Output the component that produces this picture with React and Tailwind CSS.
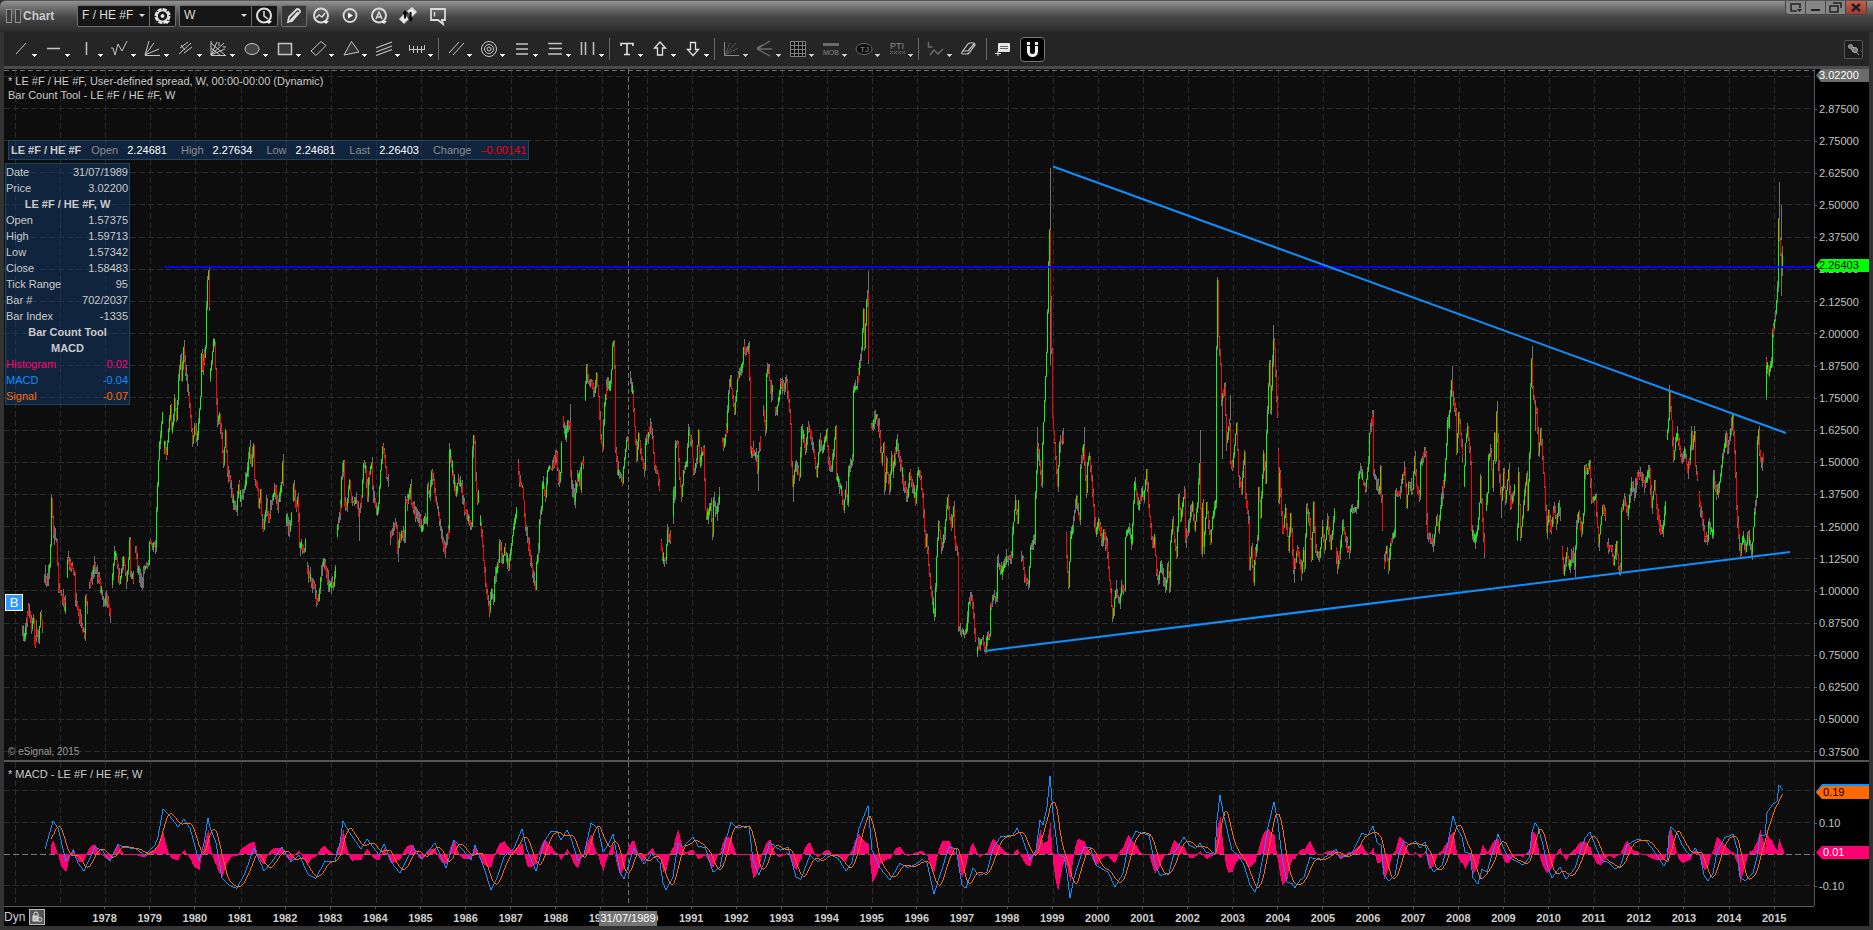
import React from "react";

const YEAR_LINES = [
  15, 60, 105, 150, 195, 241, 286, 331, 376, 421, 466, 511, 556, 602, 647, 692, 737, 782, 827, 872,
  917, 962, 1008, 1053, 1098, 1143, 1188, 1233, 1278, 1323, 1368, 1414, 1459, 1504, 1549, 1594, 1639,
  1684, 1729, 1774,
];
const PRICE_LINES = [
  76, 108, 140, 172, 204, 237, 269, 301, 333, 365, 397, 430, 462, 494, 526, 558, 590, 623, 655, 687,
  719, 751,
];
const MACD_LINES = [790, 822, 885];

const YEARS = Array.from({ length: 38 }, (_, i) => 1978 + i);
const PRICES = Array.from({ length: 21 }, (_, i) => (2.875 - i * 0.125).toFixed(5));

// Weekly price path, one string for each unbroken run of contracts.
const PRICE_RUNS = [
  "22,627 25,637 29,606 32,627 34,618 35,645 37,630 39,639 41,612 43,628",
  "44,575 47,581 50,567 51,545 52,498 54,535 57,540 59,590 62,594 66,609",
  "67,578 68,560 71,566 75,572 76,600 79,612 82,628 85,634 86,597 88,612",
  "89,588 95,565 100,582 104,604 107,597 111,614",
  "112,585 115,552 117,558 120,583 124,557 127,581 129,560 130,540 131,572 134,579",
  "135,553 136,547 138,568 142,583 145,568 149,565 150,542 153,545 156,548 157,510 158,485 159,460 160,442 161,435 163,412",
  "164,443 167,455 169,430 171,405 172,430 174,415 175,398 177,420 179,380 181,360 182,380 184,347 186,373 189,393 190,403 193,443 195,427 197,438 198,435 200,410 201,397 202,353 203,370 206,347 207,307 208,280 209,271 209,307",
  "210,377 212,363 214,340 215,343 216,370 217,403 218,420 220,415 222,438 224,463 226,430 228,473 231,483 233,497 237,510 239,485 241,500 245,488 248,470 250,447 252,466 254,445 255,480 258,488 259,508 261,490 262,516 264,530 267,503 269,521 272,503 276,487 278,508 282,483 283,463 284,484",
  "286,523 287,515 290,531 292,513",
  "293,500 294,485 296,508 298,497 300,543 303,548 305,551 306,540",
  "307,568 312,581 315,588 317,601 319,601 321,577 324,560 327,573 329,588 332,583 334,587 336,567",
  "337,537 338,525 341,507 342,477 344,462 345,505 347,507 350,480 352,503 354,503 357,500 359,517 360,510 362,497 364,463 366,467 368,497 369,477 372,463 373,487 377,513 379,503 381,470 383,447 385,457 387,477 389,483",
  "390,540 394,527 397,525 398,553 400,540 402,533 405,537 406,503 408,500 411,485 412,503 417,518 419,515 422,530 425,517 427,523 428,487 430,497 432,472 434,480 436,502 438,507 441,527 443,540 445,553 447,540 449,530 450,450 453,470 456,493 459,480 462,487 465,510 468,518 472,527 473,450 474,435 475,443 476,480 478,503 479,490",
  "480,518 482,533 484,560 486,583 488,600 490,610 492,590 494,602 495,577 499,563 500,543 503,563 505,547 509,568 512,543 514,527 517,510",
  "518,463 520,483 523,487 526,527 528,540 531,560 534,577 536,590 537,563 539,550 540,520 542,507 543,483 546,497 548,470 553,467 557,453 559,483 561,473 562,443",
  "563,417 566,437 568,423 570,423 571,477 575,502 577,483 580,473 581,490 582,463 584,463",
  "585,400 587,367 589,383 592,383 595,393 597,373 599,397 601,440 603,447 605,403 608,380 610,390 612,370 613,347 614,343 615,367 616,450 618,470 623,483 624,467 627,440 629,443",
  "630,378 633,393 635,427 637,460 639,433 642,457 645,470 646,443 651,427 653,437 655,467 658,473 660,490",
  "661,543 664,560 666,560 668,530 669,540 671,537",
  "673,517 674,490 675,497 676,443 678,443 680,477 682,497 684,470 687,463 689,430 692,443 694,473 697,460 699,430 700,463 704,448 706,510 708,517 711,505 713,533 714,500 717,513 720,497",
  "722,438 724,445 727,430 728,410 729,393 731,378 733,397 735,413 738,380 740,373 743,363 744,347 746,353 749,347 750,377 751,453 753,450 757,457 758,470 759,453 761,440",
  "763,413 764,410 766,430 767,373 769,367 771,393 773,387",
  "775,410 777,413 779,397 782,380 784,390 787,380 789,403 791,423 792,467 793,487 796,463 800,477 802,427 806,450 808,427 811,433 815,457 817,477 820,440 823,450 827,432 829,460 832,470 834,450 836,427 837,477 842,490 844,510 846,490 848,503 849,470 853,457 854,390 857,387 859,373 862,350 864,310 865,347 867,300 868,293 868,333 869,360",
  "871,427 874,423 877,417 880,433 882,463 884,443 885,487 887,463 890,490 892,457 893,470 897,443 901,463 904,483 908,497 910,473 913,487 916,503 918,473 920,470 923,497 926,547 927,537 930,577 932,597 935,617 937,557 939,523 942,547 945,533 948,497 950,520 952,527 954,507 955,540 958,553 959,627 962,633 967,630 969,603 972,597 974,617 976,640",
  "977,653 980,643 983,640 986,652 987,638 990,635 991,607 993,597 997,598 998,563 1002,572 1007,558 1012,558 1013,533 1016,500 1018,523 1019,500",
  "1021,557 1023,558 1025,577 1029,585 1031,547 1035,540 1036,493 1038,447 1040,460 1042,483 1043,443 1045,400 1047,353 1048,312 1049,262 1050,230 1051,300 1052,350 1053,417 1056,457 1058,487 1060,443 1063,437 1064,440",
  "1066,533 1067,557 1069,587 1071,537 1074,520 1077,497 1080,520 1081,467 1084,447 1087,493 1088,463 1090,457 1093,493 1096,533 1099,520 1103,543 1104,530 1108,553 1111,593 1113,617 1116,590 1120,603 1122,587 1125,590 1126,537 1129,527 1132,543 1134,503 1135,483 1139,507 1142,490 1144,500 1147,470 1149,507 1153,547 1155,537 1157,573 1159,580 1161,563 1166,590 1168,567 1170,587 1171,543 1173,523 1177,557 1179,497 1181,520 1185,490 1186,540 1190,520 1193,503 1195,530 1198,503 1200,463 1202,553 1203,503 1204,547 1207,503 1211,543 1213,517 1216,503 1217,347 1218,280 1219,337 1221,363 1222,400 1225,387 1227,443 1229,427 1230,427 1231,463 1233,467 1237,423 1239,477 1242,490 1245,453 1246,497 1249,520 1250,567 1252,547 1254,583 1255,560 1258,540 1259,487 1261,517 1264,453 1266,483 1267,433 1270,363 1271,410 1273,363 1274,340 1275,350 1277,400 1278,417",
  "1278,450 1279,500 1280,473 1283,533 1286,510 1289,550 1291,513 1294,570 1298,550 1302,573 1304,550 1305,567 1307,507 1310,520 1312,560 1314,503 1316,550 1320,557 1323,527 1325,550 1328,520 1331,550 1335,510",
  "1336,547 1338,567 1341,547 1343,523 1348,550 1350,550 1351,510 1358,507 1359,477 1361,467 1363,480 1366,487 1369,463 1370,433 1373,417 1374,473 1377,483 1380,490 1381,467 1383,530",
  "1384,567 1387,547 1389,570 1391,543 1395,533 1396,493 1400,493 1405,467 1407,507 1409,483 1413,490 1415,457 1417,487 1420,497 1421,463 1425,452 1426,453 1427,520 1428,533 1434,543 1437,517 1439,530 1442,497 1445,477 1447,443 1448,420 1449,427 1452,380 1453,397 1456,410 1457,453 1459,413 1463,457",
  "1464,487 1466,443 1468,427 1471,463 1472,530 1475,540 1478,530 1480,503 1481,477 1483,520 1485,553",
  "1486,510 1488,493 1489,457 1491,453 1493,487 1495,433 1496,460 1497,413 1499,463 1502,500 1504,473 1506,500 1509,470 1511,507 1515,487",
  "1517,540 1518,527 1519,473 1521,537 1523,517 1525,493 1527,477 1528,510 1530,453 1531,387 1532,360 1533,387 1535,403 1537,410 1539,453 1541,430 1543,457 1545,487 1547,533 1549,510 1551,530 1555,507 1557,523 1559,503 1561,517",
  "1562,547 1564,573 1567,553 1570,567 1573,553 1575,567 1577,527 1579,513 1582,533 1584,513 1585,467 1587,473 1590,463 1592,500 1596,497 1599,543 1603,507 1606,517",
  "1607,547 1612,547 1614,563 1617,543 1619,567 1621,570 1622,510 1625,500 1628,513 1632,483 1635,492 1638,475 1642,475 1645,485 1650,468 1652,508 1655,482 1657,508 1661,532 1664,525 1666,502",
  "1667,440 1669,420 1670,393 1672,420 1674,460 1677,433 1680,447 1682,463 1685,450 1686,457 1688,473 1690,460 1692,433 1693,447 1695,433 1696,467 1698,478",
  "1699,495 1702,515 1705,537 1708,540 1709,522 1713,535 1714,475 1717,495 1720,482 1722,465 1723,457 1727,433 1728,450 1733,417 1734,433 1736,475 1737,508 1739,538 1741,553 1743,537 1746,552 1748,535 1752,553 1753,542 1755,512 1757,498 1758,440 1759,430 1760,453 1762,466 1764,453",
  "1766,397 1766,360 1769,373 1772,363 1773,333 1776,313 1778,287 1779,220 1780,240 1781,255 1782,267 1783,255",
];

// x, high, low of weeks whose range goes far beyond the close
const LONG_WICKS = [
  [209, 267, 280], [283, 454, 466], [359, 517, 541], [398, 540, 562], [570, 404, 424], [575, 480, 508],
  [758, 455, 491], [793, 475, 502], [868, 271, 293], [1050, 168, 365], [1037, 427, 447], [1084, 427, 450],
  [1200, 430, 463], [1222, 400, 459], [1230, 395, 420], [1273, 325, 345], [1294, 560, 583], [1372, 410, 420],
  [1452, 366, 385], [1475, 540, 549], [1497, 401, 415], [1501, 490, 518], [1532, 346, 362], [1535, 400, 431],
  [1575, 560, 577], [1599, 540, 551], [1669, 388, 395], [1752, 545, 560], [1779, 182, 222], [1781, 205, 240],
  [1781, 265, 296], [1782, 246, 276],
];

const MACD_TRACE =
  "45,849 53,821 58,828 66,861 73,850 78,863 84,871 95,847 102,850 110,861 118,844 124,847 135,848 145,855 155,845 158,837 163,809 169,815 178,827 184,819 190,828 199,861 204,843 208,818 210,827 216,843 222,878 229,885 237,888 245,873 254,848 264,871 271,863 282,847 291,862 299,855 308,874 316,878 325,861 335,861 340,843 343,821 349,832 361,849 367,839 379,855 384,844 392,863 400,873 413,847 422,859 435,843 446,868 454,840 463,850 471,860 475,845 484,868 491,890 497,878 504,857 514,848 522,829 527,850 536,871 545,840 551,831 557,831 561,840 567,830 571,838 578,861 584,855 591,823 598,828 603,852 609,843 613,834 620,872 624,879 634,848 644,864 652,853 660,863 663,883 666,890 673,877 678,843 683,847 693,837 698,846 705,847 713,872 720,867 725,843 731,822 736,827 749,826 753,860 759,875 764,862 770,842 780,850 788,847 796,877 801,879 810,855 818,862 828,853 838,858 846,871 852,862 859,828 868,806 872,850 880,868 890,880 900,863 908,867 916,864 922,859 927,863 934,894 940,875 949,847 956,848 962,885 966,888 973,868 979,875 987,872 993,848 1001,836 1013,835 1017,828 1022,837 1030,860 1036,850 1040,820 1043,825 1047,807 1050,776 1053,813 1058,853 1064,857 1067,873 1070,898 1074,878 1077,868 1084,847 1090,847 1096,865 1108,872 1115,887 1123,873 1128,847 1136,831 1149,835 1155,865 1160,875 1169,873 1174,853 1184,837 1189,845 1196,848 1200,843 1206,852 1215,854 1217,820 1220,795 1224,817 1232,850 1238,855 1244,865 1250,885 1255,892 1258,883 1263,857 1268,827 1274,802 1278,823 1282,857 1287,882 1292,883 1295,888 1300,880 1304,877 1310,857 1321,860 1336,849 1340,858 1352,853 1362,833 1368,835 1373,826 1377,842 1381,845 1384,875 1389,881 1395,875 1399,853 1404,841 1410,845 1415,841 1420,848 1425,842 1429,865 1434,872 1442,865 1447,848 1453,816 1457,828 1462,837 1465,852 1470,853 1473,878 1478,884 1482,869 1487,872 1492,855 1498,834 1503,847 1508,857 1519,862 1523,865 1529,858 1532,832 1535,823 1538,827 1543,845 1547,865 1552,878 1560,867 1566,879 1575,868 1580,852 1585,838 1590,832 1596,847 1601,860 1608,862 1614,868 1620,867 1627,845 1637,839 1645,840 1652,848 1658,857 1664,866 1667,860 1669,835 1671,827 1677,833 1682,845 1690,856 1695,848 1700,855 1704,875 1708,881 1713,873 1717,852 1725,837 1733,834 1737,848 1740,877 1745,881 1753,873 1757,857 1760,835 1765,835 1767,813 1772,805 1777,801 1779,785 1783,790";

const parse = (s) => s.split(" ").map((p) => p.split(",").map(Number));

function buildBars() {
  let seed = 7;
  const rand = () => {
    seed = (seed * 16807) % 2147483647;
    return seed / 2147483647;
  };
  let wick = "";
  let up = "";
  let down = "";
  PRICE_RUNS.forEach((run) => {
    const pts = parse(run);
    for (let i = 0; i < pts.length - 1; i++) {
      const [x0, y0] = pts[i];
      const [x1, y1] = pts[i + 1];
      const steps = Math.max(1, x1 - x0);
      for (let s = 0; s < steps; s++) {
        const a = y0 + ((y1 - y0) * s) / steps;
        const b = y0 + ((y1 - y0) * (s + 1)) / steps;
        const slow = Math.abs(b - a) < 8;
        const top = Math.round(Math.min(a, b) - (slow ? rand() * 3 : 0));
        const bottom = Math.round(Math.max(a, b) + (slow ? rand() * 3 : 0));
        const hi = Math.round(top - rand() * rand() * 9);
        const lo = Math.round(bottom + rand() * rand() * 9);
        const x = x0 + s + 0.5;
        wick += `M${x} ${hi}V${lo}`;
        const kind = rand();
        if (slow && kind < 0.34) continue;
        const rising = slow && kind > 0.84 ? b > a : b < a;
        if (rising) up += `M${x} ${top}V${bottom}`;
        else down += `M${x} ${top}V${bottom}`;
      }
    }
  });
  LONG_WICKS.forEach(([x, hi, lo]) => {
    wick += `M${x + 0.5} ${hi}V${lo}`;
  });
  return { wick, up, down };
}

function buildMacd() {
  const pts = parse(MACD_TRACE);
  const line = [];
  for (let i = 0; i < pts.length - 1; i++) {
    const [x0, y0] = pts[i];
    const [x1, y1] = pts[i + 1];
    for (let x = x0; x < x1; x++) line.push([x, y0 + ((y1 - y0) * (x - x0)) / (x1 - x0)]);
  }
  line.push(pts[pts.length - 1]);
  const signal = [];
  let hist = "";
  for (let i = 6; i < line.length; i++) {
    const part = line.slice(Math.max(0, i - 9), i + 1);
    const avg = part.reduce((sum, p) => sum + p[1], 0) / part.length;
    signal.push([line[i][0], avg]);
    const h = Math.round((line[i][1] - avg) * 0.95);
    hist += `M${line[i][0] + 0.5} 854V${854 + (h === 0 ? 1 : h)}`;
  }
  const join = (list) => list.map((p) => `${p[0]},${Math.round(p[1])}`).join(" ");
  return { line: join(line), signal: join(signal), hist };
}

const bars = buildBars();
const macd = buildMacd();

function Caret({ dim }) {
  return <path d="M28 19h5v1h-1v1h-1v1h-1v-1h-1v-1h-1z" fill={dim ? "#ccc" : "#eee"} stroke="none" />;
}

function Tool({ label, children, dim, caret = true }) {
  return (
    <button aria-label={label} className="h-[28px] w-[33px] shrink-0">
      <svg width="33" height="28" fill="none" stroke={dim ? "#6a6a6a" : "#c4c4c4"} strokeWidth="1">
        {children}
        {caret && <Caret dim={dim} />}
      </svg>
    </button>
  );
}

function Divider() {
  return <div className="h-[22px] w-[6px] shrink-0 border-r border-[#6b6b6b]" />;
}

function DrawingToolbar() {
  return (
    <div className="flex h-[34px] items-center bg-[#252525] pr-[6px]">
      <Tool label="Trend line"><path d="M12 19L22 8" /></Tool>
      <Tool label="Horizontal line"><path d="M10 13.5h13" strokeWidth="1.5" /></Tool>
      <Tool label="Vertical line"><path d="M16.5 7v13" strokeWidth="1.5" /></Tool>
      <Tool label="Zigzag"><path d="M8 13h2l2 7 3-11 4 7 5-10" /></Tool>
      <Tool label="Fan"><path d="M9 20.5h15M9 20l4-14M9 20l9-12M9 20l14-6" /></Tool>
      <Tool label="Pitchfork"><path d="M10 19L22 8M12 10l4 5M11 13l8-6M15 18l8-6" /></Tool>
      <Tool label="Gann fan"><path d="M9 6v14.500h15M9 20L22 8M9 20l6-13M9 20l14-6M9 8l14 12M9 13l9 7M17 7v4M21 12h3" /></Tool>
      <Tool label="Ellipse"><ellipse cx="17" cy="14" rx="7" ry="5.500" fill="#454545" /></Tool>
      <Tool label="Rectangle"><rect x="10.500" y="8.500" width="13" height="11" fill="#3a3a3a" strokeWidth="1.5" /></Tool>
      <Tool label="Parallelogram"><path d="M10 16L20 6.500l5 4L15 20.500z" /></Tool>
      <Tool label="Triangle"><path d="M10 20L17.500 6.500 25 17z" fill="#333" /></Tool>
      <Tool label="Regression"><path d="M9 13l16-6M9 17l16-6M9 20.500l16-6" strokeWidth="1.2" /></Tool>
      <Tool label="Cycles"><path d="M9 14.500h16M9.500 10v6M13.500 11v7M17.500 11v7M21.500 11v7M24.500 10v5" /></Tool>
      <Divider />
      <Tool label="Parallel lines"><path d="M10 18L20 7M14 20L25 8" /></Tool>
      <Tool label="Circles">
        <ellipse cx="17" cy="14" rx="7.500" ry="7.500" />
        <circle cx="17" cy="14" r="4.500" />
        <circle cx="17" cy="14" r="2" />
      </Tool>
      <Tool label="Fibonacci retracement"><path d="M11 9h12M11 14h12M11 19h12" strokeWidth="1.5" /></Tool>
      <Tool label="Fibonacci extension"><path d="M10 8.500h14M11 13.500h13M10 19h14" strokeWidth="1.5" /></Tool>
      <Tool label="Time zones"><path d="M10.500 7v13M14.500 7v13M22.500 7v13" strokeWidth="1.500" /></Tool>
      <Divider />
      <Tool label="Text"><path d="M11 11V8.500h12V11M17 9v11M14 19.500h6" stroke="#e2e2e2" strokeWidth="1.600" /></Tool>
      <Tool label="Up arrow"><path d="M17 7l5.500 6h-3v7h-5v-7h-3z" stroke="#e2e2e2" strokeWidth="1.300" /></Tool>
      <Tool label="Down arrow"><path d="M17 20.500l5.500-6h-3v-7h-5v7h-3z" stroke="#e2e2e2" strokeWidth="1.300" /></Tool>
      <Divider />
      <Tool label="Speed lines" dim>
        <path d="M9.500 7v13.500H24" stroke="#8a8a8a" />
        <path d="M10 20L21 8M10 20l13-7M10 20l5-12" strokeDasharray="2 1" />
      </Tool>
      <Tool label="Andrews fan" dim><path d="M9 14L22 6M9 14h15M9 14l13 7M9 13l5-3" strokeWidth="1.400" /></Tool>
      <Tool label="Gann box" dim><path d="M9.500 6.500h15v15h-15zM13.500 6v16M17.500 6v16M21.500 6v16M9 10.500h16M9 14.500h16M9 18.500h16" fill="#0c0c0c" stroke="#808080" /></Tool>
      <Tool label="Make or break" dim>
        <path d="M9 9.500h16" strokeWidth="3" />
        <text x="9" y="20" fill="#8a8a8a" stroke="none" fontSize="7">MOB</text>
      </Tool>
      <Tool label="Ellipse TJ" dim>
        <ellipse cx="17" cy="14" rx="8" ry="5.500" fill="#0c0c0c" />
        <text x="13" y="17" fill="#999" stroke="none" fontSize="8">TJ</text>
      </Tool>
      <Tool label="Profit taking index" dim>
        <text x="10" y="14" fill="#8a8a8a" stroke="none" fontSize="9">PTI</text>
        <path d="M10 16l3 3M13 16l-3 3M14 16l3 3M17 16l-3 3M18 16l3 3M21 16l-3 3M22 16l3 3M25 16l-3 3" />
      </Tool>
      <Divider />
      <Tool label="Wave labels" dim><path d="M9.500 7v5h4M11 20l4-5 4 4 5-5" strokeWidth="1.500" /></Tool>
      <Tool label="Eraser" caret={false}><path d="M10 17l6-8q1-1 2-1h4q1 0 1 2l-6 8q-1 1-2 1h-4q-2 0-1-2zM11 16h5l6-7" strokeWidth="1.200" /></Tool>
      <div className="h-[22px] w-[2px] border-r border-[#6b6b6b]" />
      <Tool label="Comments" caret={false}>
        <path d="M12 8h10q1 0 1 1v7q0 1-1 1H12q-1 0-1-1V9q0-1 1-1z" fill="#e6e6e6" stroke="none" />
        <path d="M13 11.500h8M13 13.500h8" stroke="#666" />
        <path d="M8 18.500h6M11 16v5" stroke="#ddd" />
      </Tool>
      <button aria-label="Magnet" className="flex h-[25px] w-[25px] items-center justify-center rounded-sm border border-[#777] bg-black">
        <svg width="15" height="17" fill="none" stroke="#eee" strokeWidth="3">
          <path d="M3.500 5v5.500a4 4 0 0 0 8 0V5" />
          <path d="M3.500 1v3M11.500 1v3" />
        </svg>
      </button>
      <button aria-label="Pin toolbar" className="ml-auto flex h-[19px] w-[19px] items-center justify-center rounded-xs border border-[#555] bg-[#1c1c1c]">
        <svg width="13" height="13" fill="#777" stroke="#aaa">
          <circle cx="3.500" cy="3.500" r="2" />
          <circle cx="8" cy="7" r="2.500" />
          <path d="M5 4l3 1M4 5l2 4M9 9l3 3" fill="none" />
        </svg>
      </button>
    </div>
  );
}

function HeadIcon({ label, children, caret }) {
  return (
    <button aria-label={label} className="h-[20px] w-[29px] shrink-0">
      <svg width="29" height="20" fill="none" stroke="#d9d9d9" strokeWidth="1.500">
        {children}
        {caret && <path d="M16 15h6l-3 3z" fill="#fff" stroke="none" />}
      </svg>
    </button>
  );
}

function PickBox({ label, value, children }) {
  return (
    <div className="flex h-[22px] w-[99px] rounded-xs border border-[#6d6d6d] bg-[#161616]">
      <div className="relative flex-1 border-r border-[#6d6d6d]">
        <select aria-label={label} defaultValue={value} className="block h-[18px] w-full appearance-none bg-transparent pl-1 text-[12px] text-[#dcdcdc] outline-none">
          <option>{value}</option>
        </select>
        <svg className="pointer-events-none absolute top-[8px] right-1" width="6" height="4"><path d="M0 0h6L3 3z" fill="#ddd" /></svg>
      </div>
      <button aria-label={label + " settings"} className="w-[25px]">
        <svg width="25" height="20" fill="none" stroke="#dedede">{children}</svg>
      </button>
    </div>
  );
}

function TitleBar() {
  return (
    <header className="flex h-[32px] items-start rounded-tl-md border-t border-[#555] bg-linear-to-b from-[#919191] from-0% via-[#484848] via-50% to-[#2a2a2a] pl-[6px]">
      <div className="flex h-[29px] items-center">
        <div className="flex gap-[3px]">
          <i className="h-[14px] w-[6px] border border-[#8f8f8f] bg-[#3d3d3d]" />
          <i className="h-[14px] w-[6px] border border-[#8f8f8f] bg-[#3d3d3d]" />
        </div>
        <h1 className="ml-[2px] w-[54px] text-[12px] font-bold text-[#c9c9c9]">Chart</h1>
      </div>
      <div className="flex h-[30px] items-center gap-[3px]">
        <PickBox label="Symbol" value="F / HE #F">
          <circle cx="12.500" cy="10" r="6.500" strokeWidth="3" strokeDasharray="4 1" />
          <circle cx="12.500" cy="10" r="5.500" strokeWidth="1.500" />
          <circle cx="12.500" cy="10" r="1.500" fill="#fff" />
          <path d="M14 15h6l-3 3z" fill="#fff" stroke="none" />
        </PickBox>
        <PickBox label="Interval" value="W">
          <circle cx="12" cy="9.500" r="7" strokeWidth="2" />
          <path d="M12 5v5l4 3" strokeWidth="1.500" />
          <path d="M14 15h6l-3 3z" fill="#fff" stroke="none" />
        </PickBox>
        <button aria-label="Drawing tools" className="flex h-[22px] w-[26px] items-center justify-center rounded-xs border border-[#6d6d6d] bg-[#353535]">
          <svg width="18" height="18" fill="none" stroke="#ddd" strokeWidth="1.800"><path d="M3 15l1-5L12 2q3 0 3 3L7 14zM5 14l8-9" /></svg>
        </button>
        <div className="-ml-[3px] flex">
          <HeadIcon label="Studies" caret>
            <circle cx="14" cy="9.500" r="7" strokeWidth="2" />
            <path d="M9 12l3-3 3 2 3-4" />
          </HeadIcon>
          <HeadIcon label="Playback">
            <circle cx="14" cy="9.500" r="6.500" strokeWidth="1.800" />
            <path d="M12 6.500l5 3-5 3z" fill="#fff" stroke="none" />
          </HeadIcon>
          <HeadIcon label="Alerts" caret>
            <circle cx="14" cy="9.500" r="7" strokeWidth="2" />
            <path d="M11 13l3-7 3 7M12 11h4" />
          </HeadIcon>
          <HeadIcon label="Link">
            <path d="M14 5l4-3 4 4-4 4zM6 13l4-4 4 4-4 4z" fill="#eee" />
            <path d="M11 5.500v7M16.500 6v8" stroke="#000" strokeWidth="2" />
            <path d="M8.500 8L11 4l3 4zM14 12l3 4 2-4z" fill="#000" stroke="none" />
          </HeadIcon>
          <HeadIcon label="Notes">
            <path d="M8 3h14v11h-3l1 4-5-4H8z" strokeWidth="1.800" />
            <path d="M11.500 6v4.500" strokeWidth="1.500" />
          </HeadIcon>
        </div>
      </div>
      <div className="mr-[6px] ml-auto flex h-[14px] divide-x divide-[#444] overflow-hidden rounded-b-sm border border-t-0 border-[#444] bg-[#858585]">
        <button aria-label="Dock" className="w-5"><svg width="19" height="13" fill="none" stroke="#222" strokeWidth="1.500"><path d="M11 10H5V3h9v4" /><path d="M11 8h5l-2.500 3z" fill="#222" stroke="none" /></svg></button>
        <button aria-label="Minimize" className="w-5"><svg width="19" height="13"><path d="M5 8h9v2H5z" fill="#222" /></svg></button>
        <button aria-label="Restore" className="w-5"><svg width="19" height="13" fill="none" stroke="#222" strokeWidth="1.500"><path d="M4 5h8v6H4zM7 2h8v5" /></svg></button>
        <button aria-label="Close" className="w-5 bg-linear-to-b from-[#c4604f] to-[#9a3d31]"><svg width="19" height="13" stroke="#222" strokeWidth="2.500"><path d="M6 3l8 7M14 3l-8 7" /></svg></button>
      </div>
    </header>
  );
}

function Grid({ rows, top, bottom }) {
  const d =
    rows.map((y) => `M4 ${y + 0.5}H1814`).join("") +
    YEAR_LINES.map((x) => `M${x + 0.5} ${top}V${bottom}`).join("");
  return <path d={d} stroke="#2a2a2a" strokeDasharray="6 3" fill="none" />;
}

const QUOTE = [
  ["Open", "2.24681"],
  ["High", "2.27634"],
  ["Low", "2.24681"],
  ["Last", "2.26403"],
];

const CURSOR_ROWS = [
  ["Date", "31/07/1989"],
  ["Price", "3.02200"],
  ["LE #F / HE #F, W"],
  ["Open", "1.57375"],
  ["High", "1.59713"],
  ["Low", "1.57342"],
  ["Close", "1.58483"],
  ["Tick Range", "95"],
  ["Bar #", "702/2037"],
  ["Bar Index", "-1335"],
  ["Bar Count Tool"],
  ["MACD"],
  ["Histogram", "0.02", "text-[#ff0070]"],
  ["MACD", "-0.04", "text-[#0c8fff]"],
  ["Signal", "-0.07", "text-[#ff6a00]"],
];

function PricePane() {
  return (
    <section className="relative min-w-0 flex-1">
      <svg viewBox="4 69 1810 691" preserveAspectRatio="none" className="absolute inset-0 h-full w-full" shapeRendering="crispEdges" fill="none">
        <Grid rows={PRICE_LINES} top={69} bottom={760} />
        <path d="M4 70.500H1814M628.500 69V760" stroke="#6e6e6e" strokeDasharray="5 3" />
        <path d={bars.wick} stroke="#707070" />
        <path d={bars.up} stroke="#00ff00" />
        <path d={bars.down} stroke="#ff0000" />
        <path d="M165 267H1814" stroke="#0000ff" strokeWidth="2" />
        <path d="M1053 166.500L1786 433M984 651L1790 552" stroke="#0c8fff" strokeWidth="2" shapeRendering="auto" />
      </svg>
      <div className="relative flex h-full flex-col items-start pt-[5px] pl-[4px] text-[11px] text-[#cacaca]">
        <p className="leading-[14px]">* LE #F / HE #F, User-defined spread, W, 00:00-00:00 (Dynamic)</p>
        <p className="leading-[14px]">Bar Count Tool - LE #F / HE #F, W</p>
        <dl className="mt-[38px] flex h-[20px] items-center border border-[#1b4860] bg-[#163c6e]/50 px-[2px]">
          <dt className="-mr-[4px] font-bold">LE #F / HE #F</dt>
          {QUOTE.map(([name, value]) => (
            <React.Fragment key={name}>
              <dt className="ml-[14px] text-[#8c8c8c]">{name}</dt>
              <dd className="ml-[9px] text-white">{value}</dd>
            </React.Fragment>
          ))}
          <dt className="ml-[14px] text-[#8c8c8c]">Change</dt>
          <dd className="ml-[9px] text-[#f00000]">–0.00141</dd>
        </dl>
        <table className="mt-[3px] -ml-[3px] w-[125px] border border-[#1b4860] bg-[#163c6e]/50">
          <tbody>
            {CURSOR_ROWS.map(([name, value, color], i) => (
              <tr key={i} className={color}>
                {value ? (
                  <>
                    <th className="p-0 text-left leading-[16px] font-normal">{name}</th>
                    <td className="p-0 pr-px text-right leading-[16px]">{value}</td>
                  </>
                ) : (
                  <th colSpan={2} className="p-0 text-center leading-[16px] font-bold">{name}</th>
                )}
              </tr>
            ))}
          </tbody>
        </table>
        <div className="mt-auto mb-[149px] -ml-[3px] flex h-[17px] w-[18px] items-center justify-center border border-white bg-[#3396ff] text-[13px] text-white">B</div>
        <p className="absolute bottom-[2px] left-[4px] text-[10px] leading-[12px] text-[#999]">© eSignal, 2015</p>
      </div>
    </section>
  );
}

function Tag({ className, children }) {
  return (
    <div className={"absolute right-0 left-px flex items-center " + className}>
      {children}
    </div>
  );
}

function PriceAxis() {
  return (
    <div className="relative w-[55px] shrink-0 border-l border-[#5a5a5a] bg-black text-[11px] text-[#c4c4c4]">
      <ol className="flex h-full flex-col justify-between pt-[32px]">
        {PRICES.map((p) => (
          <li key={p} className="flex h-[16px] items-center gap-[2px]">
            <i className="h-px w-[2px] bg-[#5a5a5a]" />
            {p}
          </li>
        ))}
      </ol>
      <Tag className="top-0 h-[13px] bg-[#6c6c6c] pl-[3px] text-white [clip-path:polygon(0_50%,5px_0,100%_0,100%_100%,5px_100%)]">3.02200</Tag>
      <Tag className="top-[190px] h-[13px] bg-[#00ff00] pl-[3px] text-black [clip-path:polygon(0_50%,5px_0,100%_0,100%_100%,5px_100%)]">2.26403</Tag>
    </div>
  );
}

function MacdPane() {
  return (
    <section className="relative min-w-0 flex-1">
      <svg viewBox="4 762 1810 144" preserveAspectRatio="none" className="absolute inset-0 h-full w-full" shapeRendering="crispEdges" fill="none">
        <Grid rows={MACD_LINES} top={762} bottom={906} />
        <path d="M4 854.500H1814" stroke="#7a7a7a" strokeDasharray="6 3" />
        <path d="M628.500 762V906" stroke="#6e6e6e" strokeDasharray="5 3" />
        <path d={macd.hist} stroke="#ff0070" />
        <polyline points={macd.line} stroke="#0c8fff" />
        <polyline points={macd.signal} stroke="#ff6a00" />
      </svg>
      <p className="relative pt-[5px] pl-[4px] text-[11px] leading-[14px] text-[#cacaca]">* MACD - LE #F / HE #F, W</p>
    </section>
  );
}

function MacdAxis() {
  return (
    <div className="relative w-[55px] shrink-0 border-l border-[#5a5a5a] bg-black text-[11px] text-[#c4c4c4]">
      <ol className="flex h-full flex-col justify-between pt-[53px] pb-[12px]">
        {["0.10", "-0.10"].map((p) => (
          <li key={p} className="flex h-[16px] items-center gap-[2px]">
            <i className="h-px w-[2px] bg-[#5a5a5a]" />
            {p}
          </li>
        ))}
      </ol>
      <Tag className="top-[22px] h-[15px] bg-[#0c8fff] [clip-path:polygon(0_50%,6px_0,100%_0,100%_100%,6px_100%)]" />
      <Tag className="top-[24px] h-[13px] bg-[#ff6a00] pl-[7px] text-black [clip-path:polygon(0_50%,6px_0,100%_0,100%_100%,6px_100%)]">0.19</Tag>
      <Tag className="top-[84px] h-[13px] bg-[#ff0070] pl-[7px] text-white [clip-path:polygon(0_50%,6px_0,100%_0,100%_100%,6px_100%)]">0.01</Tag>
    </div>
  );
}

function TimeAxis() {
  return (
    <footer className="relative flex h-[20px] bg-black pr-[55px] text-[#cfcfcf]">
      <div className="flex w-[78px] shrink-0 items-center gap-1 border-t border-[#5a5a5a]">
        <span className="text-[12px]">Dyn</span>
        <button aria-label="Lock scale" className="flex h-[16px] w-[16px] items-center justify-center border border-[#bbb] bg-[#555]">
          <svg width="12" height="12" fill="none" stroke="#ddd">
            <path d="M3 5V3a2 2 0 0 1 4 0v2" />
            <rect x="2" y="5" width="5" height="5" fill="#bbb" />
            <circle cx="9" cy="8.500" r="2" fill="#555" />
          </svg>
        </button>
      </div>
      <ol className="flex flex-1 border-t border-[#5a5a5a] pr-[17px]">
        {YEARS.map((year) => (
          <li key={year} className="flex min-w-0 flex-1 flex-col items-center gap-px text-[11px] leading-[16px] font-bold">
            <i className="h-[2px] w-px shrink-0 bg-[#5a5a5a]" />
            {year}
          </li>
        ))}
      </ol>
      <time className="absolute bottom-0 left-[595px] h-[15px] w-[58px] bg-[#747474] text-center text-[11px] leading-[15px] text-white">31/07/1989</time>
    </footer>
  );
}

function App() {
  return (
    <div className="flex h-screen min-h-[600px] flex-col overflow-hidden bg-[#2e2e2e] font-['Liberation_Sans',Arial,sans-serif]">
      <TitleBar />
      <main className="flex min-h-0 flex-1 flex-col border-x-4 border-b-4 border-[#333]">
        <DrawingToolbar />
        <div className="h-[3px] shrink-0 bg-[#4c4c4c]" />
        <div className="flex min-h-0 flex-1 bg-[#0d0d0d]">
          <PricePane />
          <PriceAxis />
        </div>
        <div className="h-[2px] shrink-0 bg-[#555]" />
        <div className="flex h-[144px] shrink-0 bg-[#0d0d0d]">
          <MacdPane />
          <MacdAxis />
        </div>
        <TimeAxis />
      </main>
    </div>
  );
}

export default App;
